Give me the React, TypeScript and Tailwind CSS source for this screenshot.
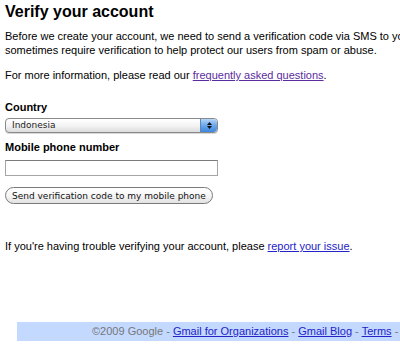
import React from "react";

const SelectBox = ({ value }: { value: string }) => {
  return (
    <div className="flex h-[15px] w-[213px] overflow-hidden rounded-[4px] border border-[#8a8a8a] bg-gradient-to-b from-white via-[#f4f4f4] to-[#dcdcdc] shadow-[0_1px_0_#d8d8d8]">
      <div className="flex-1 pl-[6px] font-['DejaVu_Sans',sans-serif] text-[9px] leading-[13px] text-[#222]">
        {value}
      </div>
      <div className="flex w-[17px] flex-col items-center justify-center gap-[1px] rounded-r-[4px] border-l border-[#5a86c4] bg-gradient-to-b from-[#b7d5f7] via-[#6aa6ec] to-[#3f86dc]">
        <svg width="5" height="3" viewBox="0 0 5 3">
          <path d="M2.5 0 L5 3 L0 3 Z" fill="#111" />
        </svg>
        <svg width="5" height="3" viewBox="0 0 5 3">
          <path d="M0 0 L5 0 L2.5 3 Z" fill="#111" />
        </svg>
      </div>
    </div>
  );
};

export default function App() {
  return (
    <div className="h-[345px] w-[400px] overflow-hidden bg-white font-['Liberation_Sans',Arial,sans-serif] text-[11px] leading-[14px] text-black">
      <div className="pl-[5px]">
        <h1 className="mt-[2px] whitespace-nowrap text-[16px] font-bold leading-[20px]">
          Verify your account
        </h1>

        <p className="mt-[7px] whitespace-nowrap">
          Before we create your account, we need to send a verification code via
          SMS to your mobile phone. We
          <br />
          sometimes require verification to help protect our users from spam or
          abuse.
        </p>

        <p className="mt-[11px] whitespace-nowrap">
          For more information, please read our{" "}
          <a href="#" className="text-[#5b2ca0] underline">
            frequently asked questions
          </a>
          .
        </p>

        <div className="mt-[18px] font-bold">Country</div>
        <div className="mt-[4px]">
          <SelectBox value="Indonesia" />
        </div>

        <div className="mt-[7px] font-bold">Mobile phone number</div>
        <input
          type="text"
          className="mt-[6px] block h-[16px] w-[213px] border border-[#a5a5a5] border-t-[#7c7c7c] bg-white outline-none"
        />

        <button className="mt-[11px] flex h-[17px] items-center rounded-full border border-[#7a7a7a] bg-gradient-to-b from-white via-[#f6f6f6] to-[#e2e2e2] px-[6px] font-['DejaVu_Sans',sans-serif] text-[9px] leading-[12px] text-[#111]">
          Send verification code to my mobile phone
        </button>

        <p className="mt-[35px] whitespace-nowrap">
          If you're having trouble verifying your account, please{" "}
          <a href="#" className="text-[#2323c8] underline">
            report your issue
          </a>
          .
        </p>
      </div>

      <div className="ml-[17px] mt-[69px] h-[19px] whitespace-nowrap bg-[#c3d9ff] pl-[75px] leading-[19px] text-[#777]">
        ©2009 Google -{" "}
        <a href="#" className="text-[#2323c8] underline">
          Gmail for Organizations
        </a>{" "}
        -{" "}
        <a href="#" className="text-[#2323c8] underline">
          Gmail Blog
        </a>{" "}
        -{" "}
        <a href="#" className="text-[#2323c8] underline">
          Terms
        </a>{" "}
        -{" "}
        <a href="#" className="text-[#2323c8] underline">
          Help
        </a>
      </div>
    </div>
  );
}
